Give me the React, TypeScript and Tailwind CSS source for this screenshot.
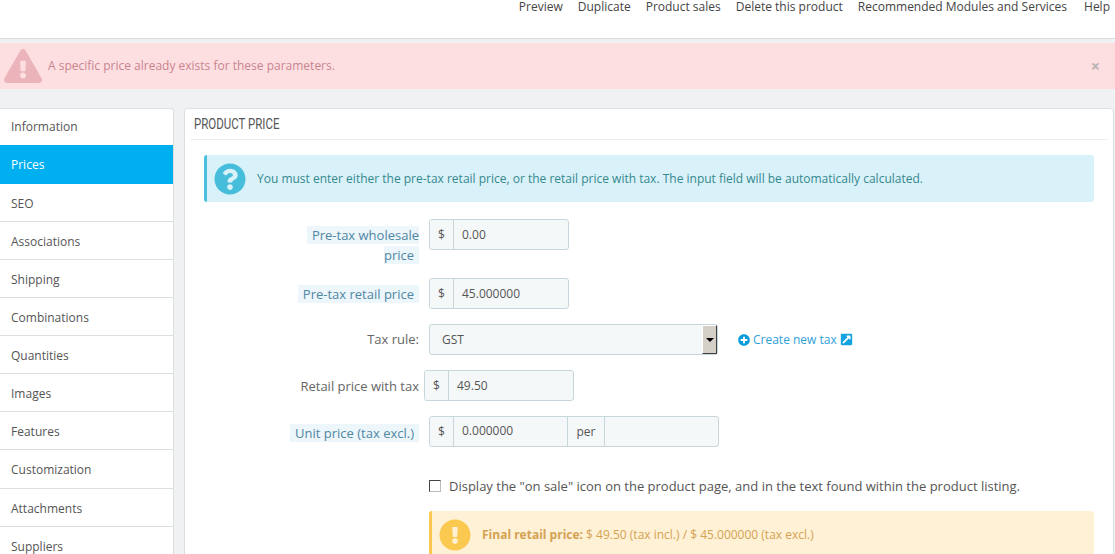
import { FaExclamationTriangle, FaExclamationCircle, FaQuestionCircle, FaPlusCircle, FaExternalLinkSquareAlt } from "react-icons/fa";

const tabs = [
  "Information",
  "Prices",
  "SEO",
  "Associations",
  "Shipping",
  "Combinations",
  "Quantities",
  "Images",
  "Features",
  "Customization",
  "Attachments",
  "Suppliers",
];

const topLinks = ["Preview", "Duplicate", "Product sales", "Delete this product", "Recommended Modules and Services"];

function Addon({ children, className = "" }: { children: React.ReactNode; className?: string }) {
  return (
    <span className={`flex items-center justify-center bg-[#f5f8f9] text-[#555] text-[12px] ${className}`}>
      {children}
    </span>
  );
}

function HintLabel({ children }: { children: React.ReactNode }) {
  return <span className="bg-[#edf6fb] text-[#4f87a3] text-[13px] px-[5px]">{children}</span>;
}

function PriceInput({ value, width }: { value: string; width: string }) {
  return (
    <div className={`flex h-[31px] ${width} border border-[#c7d6db] rounded-[3px] bg-[#f5f8f9] overflow-hidden`}>
      <Addon className="w-[24px] border-r border-[#c7d6db]">$</Addon>
      <span className="pl-[8px] leading-[29px] text-[12px] text-[#555]">{value}</span>
    </div>
  );
}

export default function App() {
  return (
    <div className="h-[554px] overflow-hidden bg-[#eff1f2] font-['Open_Sans',sans-serif] text-[#555]">
      {/* Toolbar */}
      <div className="h-[39px] bg-white border-b border-[#d9dcde] flex justify-end pr-[5px] text-[12px] text-[#444] leading-[14px]">
        {topLinks.map((l) => (
          <span key={l} className="ml-[15px]">
            {l}
          </span>
        ))}
        <span className="ml-[17px]">Help</span>
      </div>

      {/* Error */}
      <div className="mt-[4px] h-[46px] bg-[#fddfe1] flex items-center pl-[4px] pr-[15px] text-[#c98490] text-[12px]">
        <FaExclamationTriangle className="text-[#ebb4bb] w-[38px] h-[34px]" />
        <span className="ml-[6px]">A specific price already exists for these parameters.</span>
        <span className="ml-auto text-[#b9b4b4] text-[16px] font-bold leading-none">×</span>
      </div>

      <div className="mt-[19px] flex gap-[10px] items-start">
        {/* Tabs */}
        <div className="w-[174px] bg-white border-t border-r border-[#dcdfe0] rounded-tr-[3px] shrink-0">
          {tabs.map((t) =>
            t === "Prices" ? (
              <div key={t} className="h-[39px] flex items-center pl-[11px] bg-[#00aff0] text-white text-[12px]">
                {t}
              </div>
            ) : t === "Information" ? (
              <div key={t} className="h-[36px] flex items-center pl-[11px] text-[12px] text-[#555]">
                {t}
              </div>
            ) : (
              <div
                key={t}
                className="h-[38.075px] flex items-center pl-[11px] pt-[3px] border-b border-[#dcdfe0] text-[12px] text-[#555] last:border-b-0"
              >
                {t}
              </div>
            )
          )}
        </div>

        {/* Panel */}
        <div className="flex-1 mr-[1px] h-[460px] bg-white border border-[#dcdfe0] rounded-[4px] px-[5px]">
          <div className="h-[31px] border-b border-[#eeeeee] pl-[4px] flex items-center">
            <span className="font-['Roboto',sans-serif] text-[14px] text-[#555] scale-x-[0.82] origin-left whitespace-nowrap">
              PRODUCT PRICE
            </span>
          </div>

          <div className="px-[14px]">
            {/* Info */}
            <div className="mt-[15px] h-[47px] bg-[#d9f1f8] border-l-[3px] border-[#4ac0de] rounded-[3px] flex items-center pl-[7px] text-[12px] text-[#34898f]">
              <FaQuestionCircle className="text-[#45bddb] w-[32px] h-[32px]" />
              <span className="ml-[11px]">
                You must enter either the pre-tax retail price, or the retail price with tax. The input field will be automatically calculated.
              </span>
            </div>

            {/* Wholesale */}
            <div className="mt-[17px] flex h-[31px]">
              <div className="w-[215px] pl-[100px] pt-[6px] text-right leading-[18.5px]">
                <HintLabel>Pre-tax wholesale price</HintLabel>
              </div>
              <div className="ml-[10px]">
                <PriceInput value="0.00" width="w-[140px]" />
              </div>
            </div>

            {/* Retail */}
            <div className="mt-[28px] flex items-center">
              <div className="w-[215px] text-right leading-[19px]">
                <HintLabel>Pre-tax retail price</HintLabel>
              </div>
              <div className="ml-[10px]">
                <PriceInput value="45.000000" width="w-[140px]" />
              </div>
            </div>

            {/* Tax rule */}
            <div className="mt-[15px] flex items-center">
              <div className="w-[215px] pt-[1px] text-right text-[13px] text-[#666]">Tax rule:</div>
              <div className="ml-[10px] relative flex items-center w-[289px] h-[31px] border border-[#c7d6db] rounded-[3px] bg-[#f5f8f9] pl-[12px] pt-[1px] text-[12px] text-[#555]">
                GST
                <span className="absolute right-0 top-0 bottom-0 w-[15px] bg-[#d4d0c8] border border-t-white border-l-white border-r-[#404040] border-b-[#404040] flex items-center justify-center">
                  <span className="w-0 h-0 border-x-[4px] border-x-transparent border-t-[4px] border-t-black" />
                </span>
              </div>
              <div className="ml-[20px] flex items-center text-[#2e9fd8] text-[12px]">
                <FaPlusCircle className="w-[12px] h-[12px] text-[#0a9cd8]" />
                <span className="ml-[3px]">Create new tax</span>
                <FaExternalLinkSquareAlt className="ml-[3px] w-[13px] h-[13px] text-[#13a3e0]" />
              </div>
            </div>

            {/* Retail with tax */}
            <div className="mt-[15px] flex items-center">
              <div className="w-[215px] pt-[3px] text-right text-[13px] text-[#666] whitespace-nowrap">Retail price with tax</div>
              <div className="ml-[5px]">
                <PriceInput value="49.50" width="w-[150px]" />
              </div>
            </div>

            {/* Unit price */}
            <div className="mt-[15px] flex items-center">
              <div className="w-[215px] pt-[2px] text-right leading-[19px]">
                <HintLabel>Unit price (tax excl.)</HintLabel>
              </div>
              <div className="ml-[10px] flex h-[31px] w-[290px] border border-[#c7d6db] rounded-[3px] bg-[#f5f8f9] overflow-hidden text-[12px] text-[#555]">
                <Addon className="w-[24px] border-r border-[#c7d6db]">$</Addon>
                <span className="w-[114px] pl-[8px] leading-[28px] border-r border-[#c7d6db]">0.000000</span>
                <Addon className="w-[37px] border-r border-[#c7d6db]">per</Addon>
              </div>
            </div>

            {/* On sale */}
            <div className="mt-[31px] ml-[225px] flex items-center h-[16px]">
              <span className="w-[12px] h-[12px] bg-white border border-t-[#444] border-l-[#444] border-r-[#bbb] border-b-[#bbb] shrink-0" />
              <span className="ml-[8px] pt-[1px] text-[13px] text-[#555] whitespace-nowrap">
                Display the "on sale" icon on the product page, and in the text found within the product listing.
              </span>
            </div>

            {/* Final price */}
            <div className="mt-[17px] ml-[225px] h-[47px] bg-[#fff1d6] border-l-[3px] border-[#fbc94f] rounded-[3px] flex items-center pl-[7px] text-[12px] text-[#d3a252]">
              <FaExclamationCircle className="text-[#fbc94f] w-[32px] h-[32px]" />
              <span className="ml-[11px]">
                <b>Final retail price:</b> $ 49.50 (tax incl.) / $ 45.000000 (tax excl.)
              </span>
            </div>
          </div>
        </div>
      </div>
    </div>
  );
}
